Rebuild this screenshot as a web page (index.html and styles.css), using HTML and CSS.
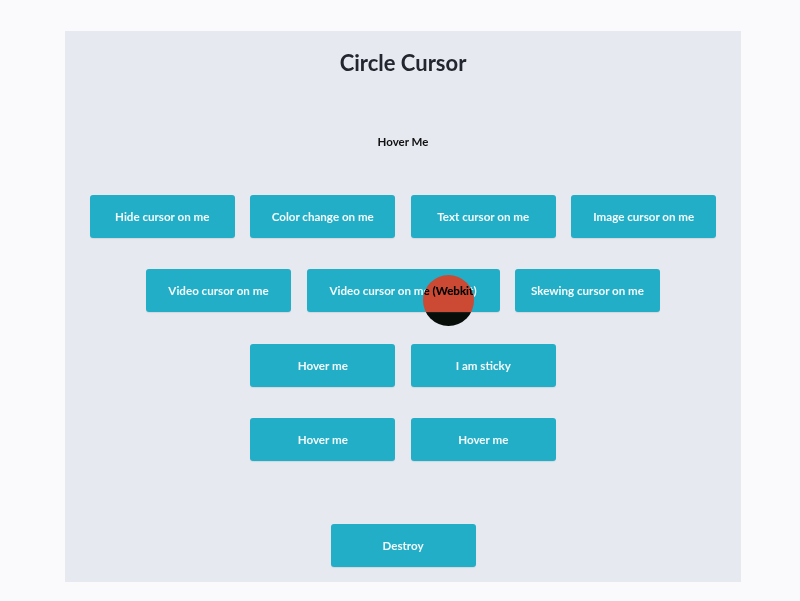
FILE: index.html
```html
<!DOCTYPE html>
<html lang="en">
<head>
<meta charset="utf-8">
<title>Circle Cursor</title>
<link rel="stylesheet" href="styles.css">
</head>
<body>
<main class="panel">
  <h1 class="title">Circle Cursor</h1>
  <div class="hover-target">Hover Me</div>
  <div class="rows">
    <div class="row">
      <button class="btn">Hide cursor on me</button>
      <button class="btn">Color change on me</button>
      <button class="btn">Text cursor on me</button>
      <button class="btn">Image cursor on me</button>
    </div>
    <div class="row">
      <button class="btn">Video cursor on me</button>
      <button class="btn btn-wide">Video cursor on me (Webkit)</button>
      <button class="btn">Skewing cursor on me</button>
    </div>
    <div class="row">
      <button class="btn">Hover me</button>
      <button class="btn">I am sticky</button>
    </div>
    <div class="row">
      <button class="btn">Hover me</button>
      <button class="btn">Hover me</button>
    </div>
  </div>
  <div class="row destroy-row">
    <button class="btn">Destroy</button>
  </div>
</main>
<div class="cursor"></div>
</body>
</html>
```

FILE: styles.css
```css
html, body {
  margin: 0;
  padding: 0;
}
body {
  background: #fafafd;
  font-family: Lato, "Open Sans", Arial, sans-serif;
  width: 800px;
  height: 601px;
  overflow: hidden;
}
.panel {
  box-sizing: border-box;
  margin: 31px 0 0 65px;
  width: 676px;
  height: 551px;
  background: #e7e9f1;
  padding-top: 18px;
  display: flex;
  flex-direction: column;
  align-items: center;
}
.title {
  margin: 0;
  font-size: 22px;
  line-height: 27px;
  font-weight: 700;
  color: #23262f;
}
.hover-target {
  margin-top: 59px;
  font-size: 11.5px;
  line-height: 14px;
  font-weight: 700;
  color: #111;
}
.rows {
  margin-top: 46px;
  display: flex;
  flex-direction: column;
  gap: 31.3px;
  align-items: center;
}
.row {
  display: flex;
  gap: 15.5px;
  justify-content: center;
}
.destroy-row {
  margin-top: 63.4px;
}
.btn {
  width: 145px;
  height: 43px;
  border: none;
  border-radius: 3px;
  background: #22aec6;
  color: #f2fbfd;
  font-family: Lato, "Open Sans", Arial, sans-serif;
  font-size: 11.6px;
  font-weight: 700;
  padding: 0;
  box-shadow: 0 1px 1px rgba(0, 0, 0, 0.08);
}
.btn-wide {
  width: 193px;
}
.cursor {
  position: absolute;
  left: 423px;
  top: 275px;
  width: 51px;
  height: 51px;
  border-radius: 50%;
  background: #eef7fa;
  mix-blend-mode: difference;
}
```
